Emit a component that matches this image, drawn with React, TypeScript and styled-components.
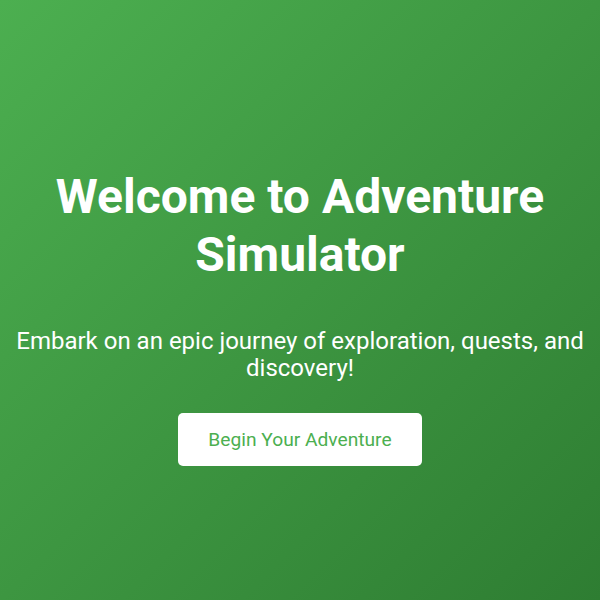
import * as React from "react";
import styled, { createGlobalStyle } from "styled-components";

const GlobalStyle = createGlobalStyle`
    html, body, #root {
        margin: 0;
        padding: 0;
        height: 100%;
    }
    body {
        font-family: Roboto, "Liberation Sans", sans-serif;
    }
`;

const Hero = styled.main`
    display: flex;
    flex-direction: column;
    align-items: center;
    justify-content: center;
    box-sizing: border-box;
    height: 100%;
    padding: 40px 10px 6px;
    text-align: center;
    color: #fff;
    background: linear-gradient(135deg, #4caf50, #2e7d32);
`;

const Title = styled.h1`
    margin: 0 0 20px;
    font-size: 48px;
    font-weight: 700;
    line-height: 1.2;
`;

const Subtitle = styled.p`
    margin: 24px 0 30px;
    font-size: 24px;
    line-height: 1.15;
`;

const StartButton = styled.button`
    padding: 15px 30px;
    border: none;
    border-radius: 5px;
    background: #fff;
    color: #4caf50;
    font-family: inherit;
    font-size: 19.2px;
    cursor: pointer;
`;

export default function App() {
    return (
        <>
            <GlobalStyle />
            <Hero>
                <Title>Welcome to Adventure Simulator</Title>
                <Subtitle>Embark on an epic journey of exploration, quests, and discovery!</Subtitle>
                <StartButton>Begin Your Adventure</StartButton>
            </Hero>
        </>
    );
}
